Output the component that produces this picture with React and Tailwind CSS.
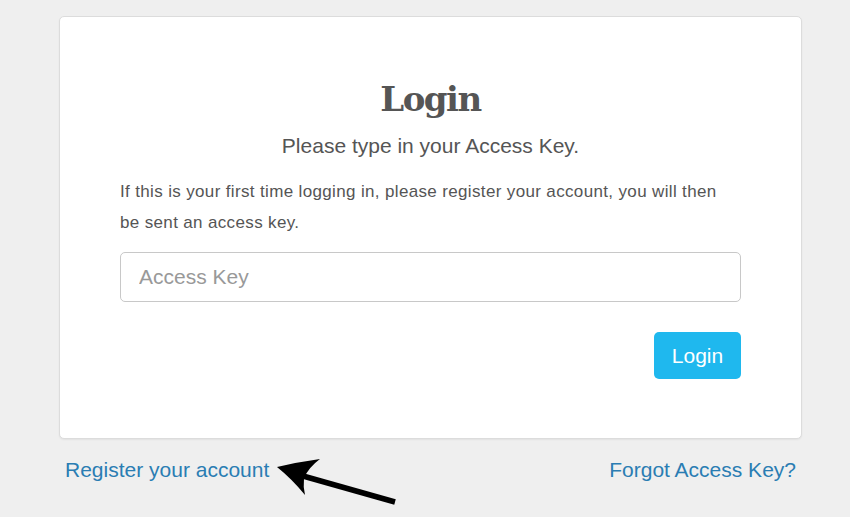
export default function App() {
  return (
    <div className="relative min-h-[517px] w-[850px] bg-[#efefef] pt-[16px] font-['Liberation_Sans',Arial,sans-serif]">
      <div className="mx-[59px] w-[743px] rounded-[5px] border border-[#dcdcdc] bg-white px-[60px] pt-[64px] pb-[59px] shadow-[0_1px_2px_rgba(0,0,0,0.06)]">
        <h1 className="text-center font-['DejaVu_Serif',serif] text-[34px] font-bold leading-[36px] tracking-[-1.5px] text-[#555]">Login</h1>
        <p className="mt-[16px] text-center text-[21px] leading-[26px] text-[#555]">Please type in your Access Key.</p>
        <p className="mt-[17px] text-[17px] leading-[31px] tracking-[0.35px] text-[#555]">
          If this is your first time logging in, please register your account, you will then be sent an access key.
        </p>
        <input
          type="text"
          placeholder="Access Key"
          className="mt-[14px] block h-[50px] w-full rounded-[5px] border border-[#c8c8c8] bg-white px-[18px] text-[21px] text-[#555] placeholder:text-[#999] outline-none"
        />
        <div className="mt-[30px] flex justify-end">
          <button className="h-[47px] w-[87px] rounded-[5px] bg-[#1fb8ee] text-[21px] text-white">Login</button>
        </div>
      </div>
      <div className="mx-[59px] mt-[18px] flex w-[743px] justify-between px-[6px] text-[21px] leading-[26px] text-[#2a7db3]">
        <a href="#" className="">Register your account</a>
        <a href="#" className="">Forgot Access Key?</a>
      </div>
      <svg className="absolute left-0 top-0" width="850" height="517" viewBox="0 0 850 517">
        <line x1="303" y1="476" x2="395" y2="502" stroke="#000" strokeWidth="5.5" strokeLinecap="butt" />
        <path d="M277,467 Q298,462 320,459 Q309,467 304,478 Q303,487 305,495 Q292,479 277,467 Z" fill="#000" />
      </svg>
    </div>
  );
}
